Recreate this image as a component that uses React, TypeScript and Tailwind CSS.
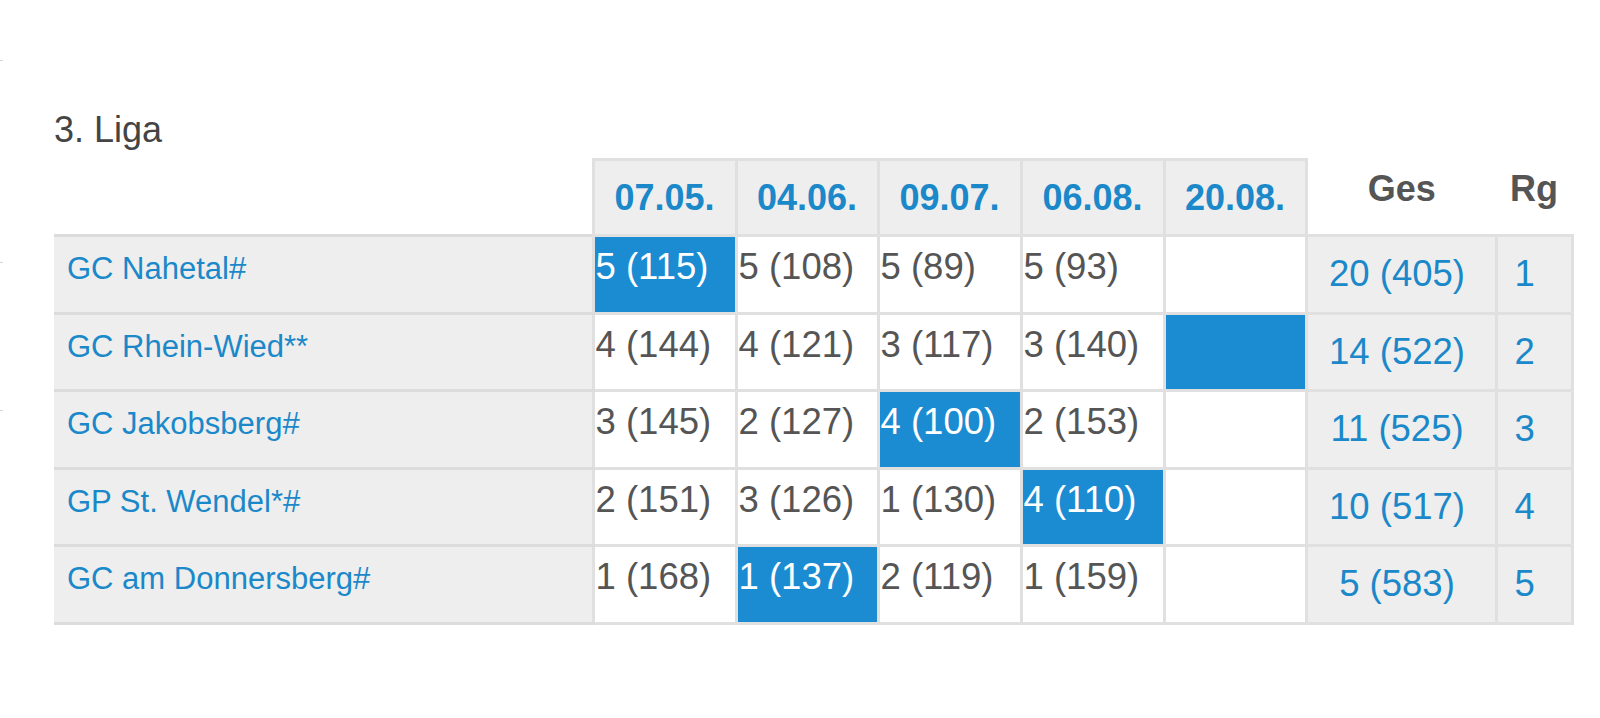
import React from 'react';

const dates = ['07.05.', '04.06.', '09.07.', '06.08.', '20.08.'];

const rows = [
    { name: 'GC Nahetal#', scores: ['5 (115)', '5 (108)', '5 (89)', '5 (93)', ''], hi: 0, total: '20 (405)', rank: 1 },
    { name: 'GC Rhein-Wied**', scores: ['4 (144)', '4 (121)', '3 (117)', '3 (140)', ''], hi: 4, total: '14 (522)', rank: 2 },
    { name: 'GC Jakobsberg#', scores: ['3 (145)', '2 (127)', '4 (100)', '2 (153)', ''], hi: 2, total: '11 (525)', rank: 3 },
    { name: 'GP St. Wendel*#', scores: ['2 (151)', '3 (126)', '1 (130)', '4 (110)', ''], hi: 3, total: '10 (517)', rank: 4 },
    { name: 'GC am Donnersberg#', scores: ['1 (168)', '1 (137)', '2 (119)', '1 (159)', ''], hi: 1, total: '5 (583)', rank: 5 },
];

const App: React.FC = () =>
{
    return (
        <div className="flex min-h-[718px] bg-white font-['Liberation_Sans',Arial,sans-serif]">
            {/* kleine Markierungen am linken Rand */}
            <div className="flex w-[4px] flex-col">
                <div className="mt-[60px] h-px w-[3px] bg-gray-300" />
                <div className="mt-[201px] h-px w-[3px] bg-gray-300" />
                <div className="mt-[147px] h-px w-[3px] bg-gray-300" />
            </div>

            <div className="pl-[50px] pt-[112px]">
                <h2 className="text-[36px] leading-[36px] text-[#444]">3. Liga</h2>

                <table className="mt-[10px] table-fixed border-collapse">
                    <colgroup>
                        <col className="w-[539px]" />
                        <col className="w-[143px]" />
                        <col className="w-[142px]" />
                        <col className="w-[143px]" />
                        <col className="w-[143px]" />
                        <col className="w-[142px]" />
                        <col className="w-[190px]" />
                        <col className="w-[76px]" />
                    </colgroup>
                    <thead>
                        <tr className="h-[76px]">
                            <th className="border-0" />
                            {dates.map((d) => (
                                <th
                                    key={d}
                                    className="border-[3px] border-[#e0e0e0] bg-[#eeeeee] text-center align-middle text-[36px] font-bold text-[#1a88c9]"
                                >
                                    {d}
                                </th>
                            ))}
                            <th className="border-0 pb-[16px] text-center align-middle text-[36px] font-bold text-[#555]">Ges</th>
                            <th className="border-0 pb-[16px] text-center align-middle text-[36px] font-bold text-[#555]">Rg</th>
                        </tr>
                    </thead>
                    <tbody>
                        {rows.map((r) => (
                            <tr key={r.name} className="h-[77.6px]">
                                <td className="border-y-[3px] border-[#dcdcdc] bg-[#eeeeee] pl-[13px] pt-[14px] align-top text-[31px] leading-[36px] text-[#1a88c9]">
                                    {r.name}
                                </td>
                                {r.scores.map((s, i) => (
                                    <td
                                        key={i}
                                        className={
                                            i === r.hi
                                                ? 'border-[3px] border-[#e0e0e0] bg-[#1b8cd2] pl-[1px] pt-[10px] align-top text-[36.5px] leading-[40px] whitespace-nowrap text-white'
                                                : 'border-[3px] border-[#e0e0e0] bg-white pl-[1px] pt-[10px] align-top text-[36.5px] leading-[40px] whitespace-nowrap text-[#555]'
                                        }
                                    >
                                        {s}
                                    </td>
                                ))}
                                <td className="border-[3px] border-[#e0e0e0] bg-[#eeeeee] pr-[8px] text-center align-middle text-[36.5px] text-[#1a88c9]">
                                    {r.total}
                                </td>
                                <td className="border-[3px] border-[#e0e0e0] bg-[#eeeeee] pl-[17px] align-middle text-[36.5px] text-[#1a88c9]">
                                    {r.rank}
                                </td>
                            </tr>
                        ))}
                    </tbody>
                </table>
            </div>
        </div>
    );
};

export default App;
